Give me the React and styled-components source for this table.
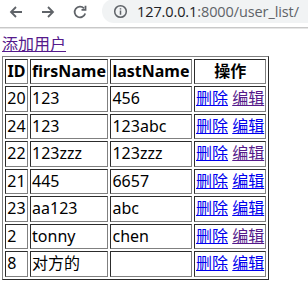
import React from 'react'
import styled, { createGlobalStyle } from 'styled-components'

const GlobalStyle = createGlobalStyle`
  body {
    margin: 0;
    background: #fff;
    font-family: "Noto Sans", "Noto Sans CJK SC", sans-serif;
    font-size: 16px;
    color: #000;
  }
`

const users = [
  { id: 20, first: '123', last: '456', delSeen: false, editSeen: true },
  { id: 24, first: '123', last: '123abc', delSeen: false, editSeen: false },
  { id: 22, first: '123zzz', last: '123zzz', delSeen: false, editSeen: true },
  { id: 21, first: '445', last: '6657', delSeen: false, editSeen: false },
  { id: 23, first: 'aa123', last: 'abc', delSeen: false, editSeen: false },
  { id: 2, first: 'tonny', last: 'chen', delSeen: false, editSeen: true },
  { id: 8, first: '对方的', last: '', delSeen: false, editSeen: false },
]

function Browser() {
  return (
    <Toolbar>
      <NavIcon viewBox="0 0 16 16">
        <path d="M14 8H3M8 3L3 8l5 5" />
      </NavIcon>
      <NavIcon viewBox="0 0 16 16">
        <path d="M2 8h11M8 3l5 5-5 5" />
      </NavIcon>
      <NavIcon viewBox="0 0 16 16">
        <path d="M13.2 9.5A5.4 5.4 0 1 1 12 4.3" />
        <path d="M13.5 1.8v4h-4" fill="none" />
      </NavIcon>
      <Omnibox>
        <InfoIcon viewBox="0 0 16 16">
          <circle cx="8" cy="8" r="6.2" />
          <path d="M8 7v4.4M8 4.6v1.2" />
        </InfoIcon>
        <Url>
          <Host>127.0.0.1</Host>:8000/user_list/
        </Url>
      </Omnibox>
    </Toolbar>
  )
}

function App() {
  return (
    <>
      <GlobalStyle />
      <Browser />
      <Page>
        <PageLink href="#" $seen>添加用户</PageLink>
        <UserTable>
          <thead>
            <tr>
              <Th>ID</Th>
              <Th>firsName</Th>
              <Th>lastName</Th>
              <Th>操作</Th>
            </tr>
          </thead>
          <tbody>
            {users.map((u) => (
              <tr key={u.id}>
                <Td>{u.id}</Td>
                <Td>{u.first}</Td>
                <Td>{u.last}</Td>
                <Td>
                  <PageLink href="#" $seen={u.delSeen}>删除</PageLink>{' '}
                  <PageLink href="#" $seen={u.editSeen}>编辑</PageLink>
                </Td>
              </tr>
            ))}
          </tbody>
        </UserTable>
      </Page>
    </>
  )
}

const Toolbar = styled.div`
  display: flex;
  align-items: center;
  height: 27px;
  padding-left: 8px;
  border-bottom: 1px solid #c8c8c8;
  box-shadow: 0 1px 0 #e6e6e6;
  background: #fff;
`

const NavIcon = styled.svg`
  width: 16px;
  height: 16px;
  margin-right: 16px;
  margin-top: -3px;
  fill: none;
  stroke: #5f6368;
  stroke-width: 1.8;
  flex-shrink: 0;
`

const Omnibox = styled.div`
  flex: 1;
  display: flex;
  align-items: center;
  align-self: flex-start;
  height: 24px;
  margin-top: -1px;
  margin-left: -2px;
  padding-left: 11px;
  background: #f1f3f4;
  border-radius: 13px 0 0 13px;
`

const InfoIcon = styled.svg`
  width: 15px;
  height: 15px;
  fill: none;
  stroke: #5f6368;
  stroke-width: 1.6;
  margin-right: 9px;
`

const Url = styled.span`
  font-family: "Open Sans", sans-serif;
  font-size: 14.5px;
  color: #5f6368;
  white-space: nowrap;
  letter-spacing: -0.1px;
`

const Host = styled.span`
  color: #202124;
`

const Page = styled.div`
  padding: 6px 0 0 2px;
  line-height: 21.5px;
`

const PageLink = styled.a`
  color: ${(p) => (p.$seen ? '#551a8b' : '#0000ee')};
  text-decoration: underline;
`

const UserTable = styled.table`
  border: 1px outset gray;
  border-spacing: 2px;
`

const Th = styled.th`
  border: 1px inset gray;
  padding: 1px 1.25px;
  font-weight: bold;
  text-align: center;
`

const Td = styled.td`
  border: 1px inset gray;
  padding: 1px 1.25px;
  white-space: nowrap;
`

export default App
